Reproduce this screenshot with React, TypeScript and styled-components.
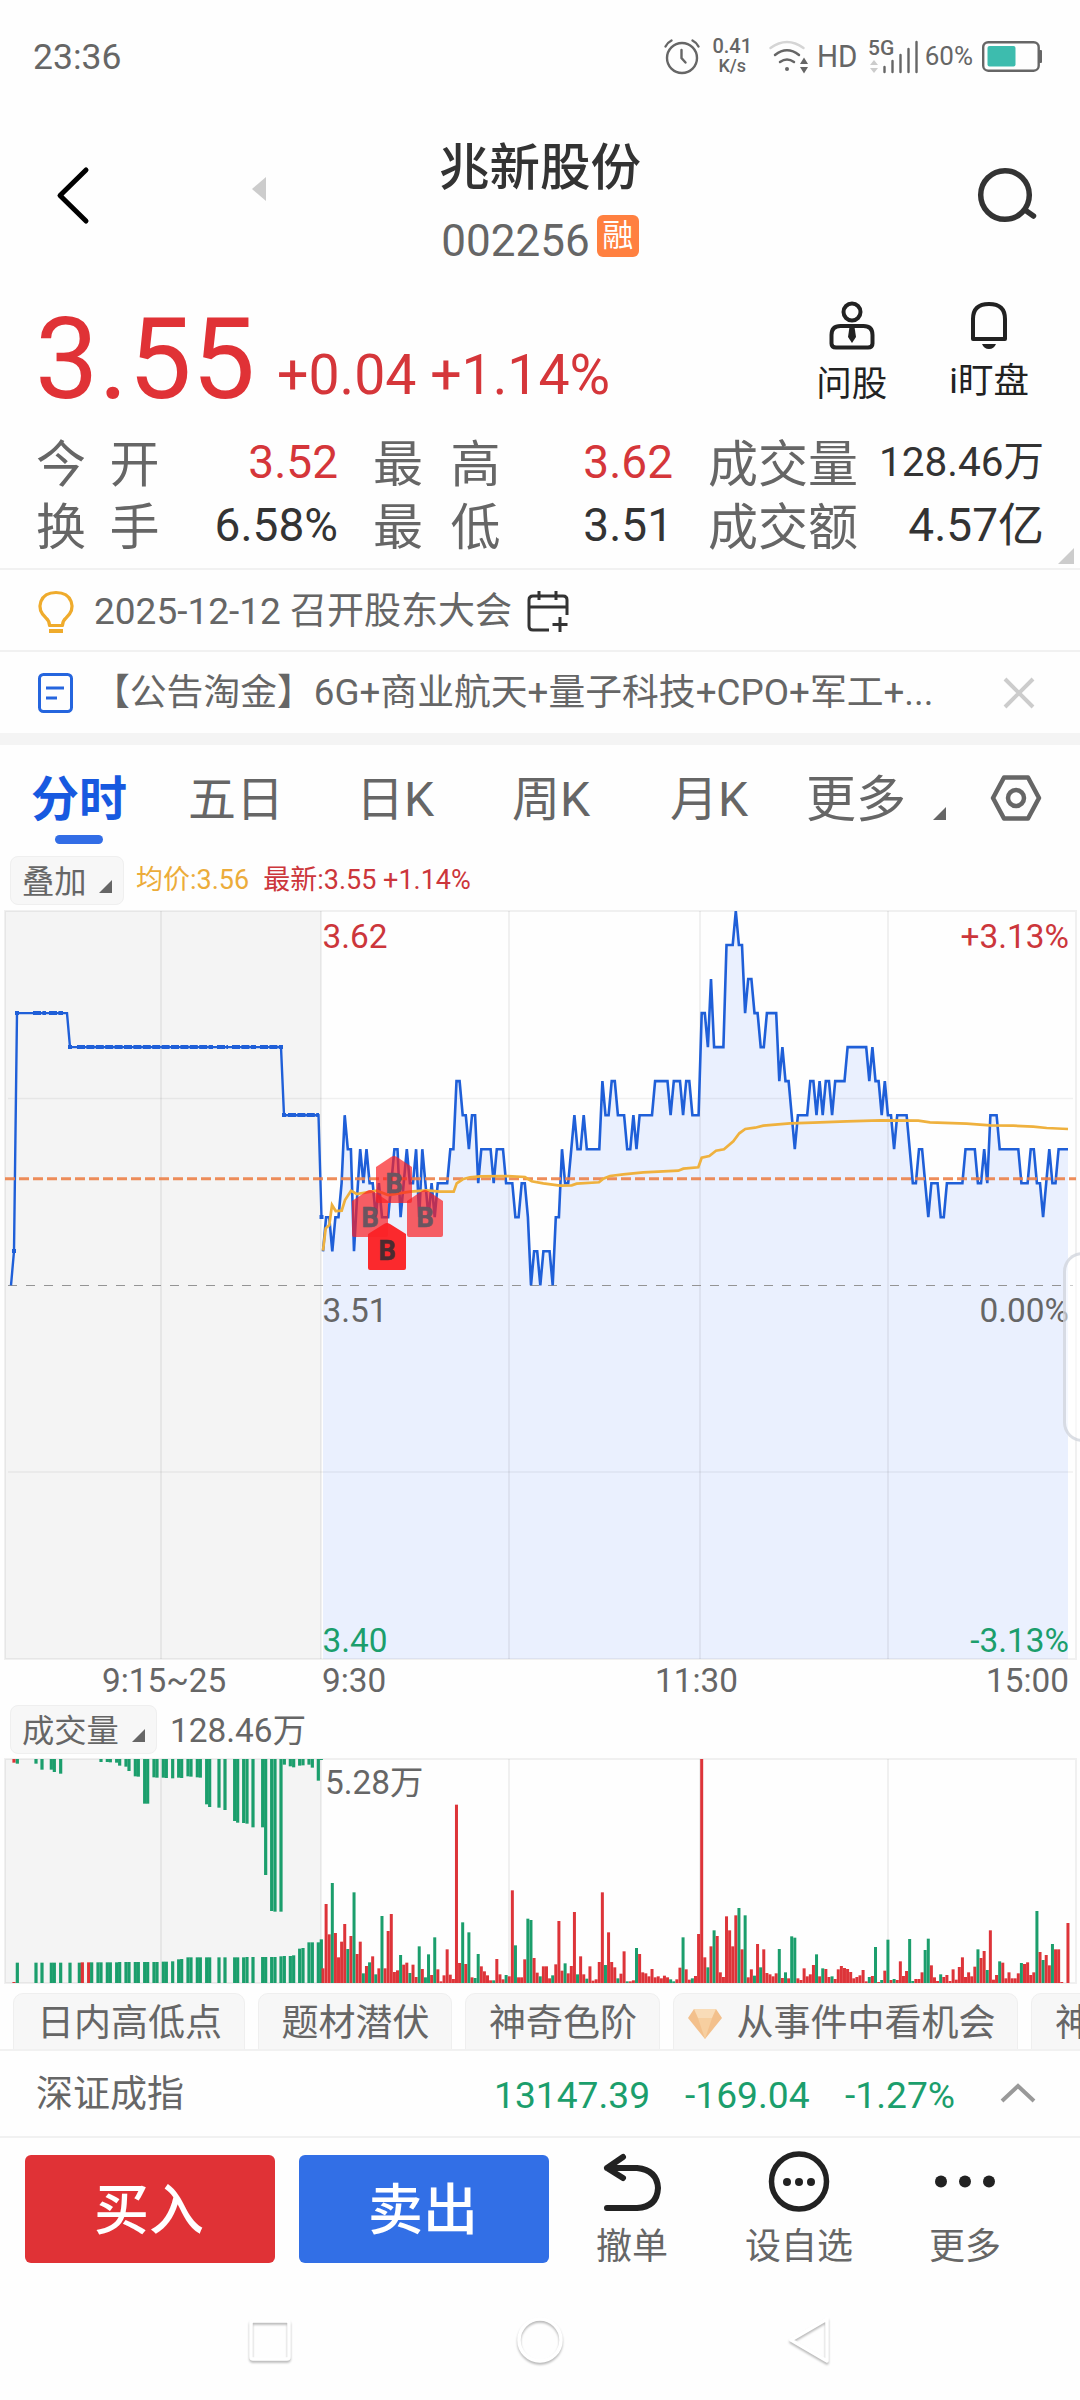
import React from "react";
import styled, { createGlobalStyle } from "styled-components";

const RED = "#e03236";
const TEXT_RED = "#d5363a";
const GREEN = "#1b9e6c";
const BLUE = "#1f5fd8";
const GREY = "#666";

const GlobalStyle = createGlobalStyle`
  * { box-sizing: border-box; }
  body {
    margin: 0;
    background: #fefefe;
    font-family: Roboto, "Noto Sans CJK SC", sans-serif;
    color: #333;
  }
  svg { display: block; flex: none; overflow: visible; }
`;

/* ---------- market data ---------- */

// [minute, ticks above the previous close]
const PRICE: [number, number][] = [
  [0, 1], [1, 2], [2, 2], [3, 1], [4, 2], [5, 2], [6, 3], [7, 5], [8, 4], [9, 4], [10, 1], [11, 2.6], [12, 4], [13, 3], [14, 4],
  [15, 3], [16, 3], [17, 2], [18, 3], [19, 2], [21, 2], [22, 3], [23, 4], [24, 4], [25, 2], [26, 3], [27, 4], [28, 3], [29, 3],
  [30, 4], [31, 2], [32, 4], [33, 3], [34, 2], [35, 3], [36, 2], [37, 3], [40, 3], [41, 4], [42, 4], [43, 6], [44, 6], [45, 5],
  [46, 5], [47, 4], [48, 5], [49, 5], [50, 3], [51, 4], [54, 4], [55, 3], [56, 4], [58, 4], [59, 3], [61, 3], [62, 2], [63, 2],
  [64, 3], [65, 3], [66, 2], [67, 0], [68, 1], [69, 1], [70, 0], [71, 1], [73, 1], [74, 0], [75, 2], [76, 2], [77, 4], [78, 3],
  [79, 3], [80, 4], [81, 5], [82, 4], [83, 4], [84, 5], [85, 4], [89, 4], [90, 6], [91, 5], [92, 5], [93, 6], [94, 6], [95, 5],
  [97, 5], [98, 4], [99, 4], [100, 5], [101, 4], [102, 5], [106, 5], [107, 6], [111, 6], [112, 5], [113, 6], [115, 6], [116, 5],
  [117, 6], [118, 6], [119, 5], [121, 5], [122, 8], [123, 8], [124, 7], [125, 9], [126, 7], [129, 7], [130, 10], [132, 10],
  [133, 11], [134, 10], [135, 10], [136, 8], [137, 9], [138, 9], [139, 8], [140, 8], [141, 7], [142, 7], [143, 8], [146, 8],
  [147, 6], [148, 7], [149, 6], [150, 6], [151, 5], [152, 4], [153, 5], [156, 5], [157, 6], [158, 6], [159, 5], [160, 6],
  [161, 5], [162, 6], [163, 6], [164, 5], [165, 6], [168, 6], [169, 7], [175, 7], [176, 6], [177, 7], [178, 6], [179, 6],
  [180, 5], [181, 6], [182, 5], [183, 5], [184, 4], [185, 5], [188, 5], [189, 4], [190, 3], [191, 3], [192, 4], [193, 4],
  [194, 3], [195, 2], [196, 3], [198, 3], [199, 2], [200, 2], [201, 3], [206, 3], [207, 4], [210, 4], [211, 3], [212, 3],
  [213, 4], [214, 3], [215, 5], [217, 5], [218, 4], [224, 4], [225, 3], [227, 3], [228, 4], [229, 4], [230, 3], [231, 3],
  [232, 2], [233, 3], [234, 4], [235, 3], [236, 3], [237, 4], [240, 4],
];

// call auction, [x, ticks]
const AUCTION: [number, number][] = [
  [11, 0], [14, 1], [17, 8], [67, 8], [70, 7], [281, 7], [284, 5], [318.5, 5], [321.5, 2],
];

// running average, x and y in thirds of a pixel from the session's left edge
const AVERAGE: [number, number][] = [
  [39, 1052], [47, 985], [58, 975], [66, 915], [77, 933], [95, 932], [105, 900], [123, 872], [140, 882], [200, 872], [235, 885],
  [300, 875], [350, 871], [390, 875], [431, 875], [440, 850], [458, 838], [480, 832], [510, 829], [590, 828], [645, 831],
  [665, 844], [700, 850], [750, 857], [785, 856], [800, 851], [867, 847], [880, 836], [900, 828], [940, 823], [1000, 817],
  [1105, 812], [1120, 806], [1165, 802], [1175, 773], [1198, 768], [1218, 752], [1242, 748], [1270, 724], [1288, 700],
  [1306, 687], [1335, 683], [1360, 677], [1440, 670], [1510, 668], [1610, 664], [1710, 661], [1825, 662], [1860, 667],
  [1970, 671], [2040, 676], [2110, 677], [2170, 680], [2210, 684], [2274, 687],
];

// one entry per minute, r = rising, g = falling
const VOLUME =
  "r44 r237 r146 g300 r150 r77 r124 r177 g102 r141 g272 r87 r124 g29 r51 g62 r80 g26 r44 g201 r44 r156 r207 r33 r38 g84 r55 r61 g30 r55 " +
  "r18 g110 r42 g17 g86 r24 g137 r41 r5 r23 r101 r25 r12 r535 r60 g182 r57 g152 r17 g15 g87 r50 r35 r23 r8 g8 r72 r26 r11 g24 " +
  "r20 r278 g113 r17 r17 r71 g193 g189 r75 r31 g20 r50 r50 r14 g23 r56 r186 r37 g59 r29 r51 r213 g26 r80 r26 g13 r50 r7 r11 r63 " +
  "r272 g54 r152 r63 r47 g14 r28 r95 g5 r5 r8 g105 r87 r32 r29 r20 r42 r17 r20 r14 r22 r17 g11 g5 r11 r46 g137 r41 r10 g14 " +
  "r21 r147 r672 r77 g47 r110 g158 r141 r32 r18 r200 r158 r110 r203 g225 r101 g203 r17 r41 g22 r117 g47 r101 r30 r26 r20 r29 g102 r15 g32 " +
  "r14 g140 g136 r14 r9 r44 r20 r26 r54 g86 r20 g44 r42 r18 g20 r12 r41 r51 r45 r42 r33 r14 r18 r23 r39 r5 g18 r21 g108 r3 " +
  "g9 r37 g130 r9 g12 r9 r65 r21 r36 g132 g6 r12 r12 r32 g99 g133 r53 r17 r6 g26 r18 r24 r6 r41 r10 r48 r77 r18 r32 r20 " +
  "r49 g101 r75 r96 g39 r158 r10 r24 g65 r61 r14 r32 r14 r14 r29 g60 r57 r62 r24 r32 g216 r93 g69 r84 r53 g117 r101 r101 r3 r0 r180";

// call auction orders hanging from the top, [x, length]
const HANGING: [number, number][] = [
  [42, 11], [52, 14], [108, 14], [126, 32], [154, 32], [163, 39], [182, 44], [303, 9], [322, 9], [331, 10], [350, 11], [359, 20],
  [378, 23], [387, 36], [406, 52], [415, 53], [434, 134], [443, 134], [462, 55], [471, 56], [490, 56], [499, 57], [518, 58],
  [536, 56], [545, 57], [564, 52], [573, 53], [592, 55], [601, 56], [620, 136], [629, 144], [657, 146], [675, 153], [704, 186],
  [713, 191], [731, 192], [741, 194], [759, 205], [788, 205], [797, 348], [815, 456], [825, 458], [843, 458], [853, 17],
  [871, 22], [881, 25], [899, 20], [909, 19], [927, 17], [937, 26], [955, 65], [964, 3],
];

// call auction matched volume, [x, height]
const MATCHED: [number, number][] = [
  [42, 3], [52, 61], [108, 61], [126, 61], [154, 61], [163, 61], [182, 61], [210, 61], [238, 61], [247, 62], [266, 62], [275, 62],
  [294, 62], [303, 62], [322, 62], [331, 62], [350, 62], [359, 63], [378, 63], [387, 63], [406, 63], [415, 63], [434, 63],
  [443, 63], [462, 63], [471, 63], [490, 64], [499, 64], [518, 65], [536, 71], [545, 72], [564, 77], [573, 77], [592, 77],
  [601, 77], [620, 77], [629, 77], [657, 77], [675, 77], [704, 77], [713, 77], [731, 77], [741, 78], [759, 78], [788, 78],
  [797, 78], [815, 78], [825, 78], [843, 80], [853, 81], [871, 81], [881, 83], [899, 103], [909, 105], [927, 122], [937, 122],
  [955, 122], [964, 131],
];
const RISING_MATCHED = [42, 247, 266];

const minuteX = (m: number) => 323 + m * 3.104;
const tickY = (t: number) => 375.3 - t * 34.03;
const join = (pts: [number, number][]) => pts.map(([x, y]) => `${x.toFixed(1)},${y.toFixed(1)}`).join(" ");

const pricePts = PRICE.map(([m, t]): [number, number] => [minuteX(m), tickY(t)]);
const auctionPts = AUCTION.map(([x, t]): [number, number] => [x, tickY(t)]);
const averagePts = AVERAGE.map(([x, y]): [number, number] => [310 + x / 3, y / 3 - 10]);

/* ---------- layout parts ---------- */

const Screen = styled.div`
  width: 1080px;
  height: 2400px;
  display: flex;
  flex-direction: column;
  overflow: hidden;
  background: #fefefe;
  & > * { flex-shrink: 0; }
`;

const StatusText = styled.span<{ size: number; mr?: number }>`
  font-size: ${(p) => p.size}px;
  margin-right: ${(p) => p.mr ?? 0}px;
  line-height: 1.2;
  color: #666;
`;

const StatusBar = styled.div`
  height: 114px;
  padding: 0 38px 0 33px;
  display: flex;
  align-items: center;
  justify-content: space-between;
`;

const StatusIcons = styled.div`
  display: flex;
  align-items: center;
`;

const NetSpeed = styled.div`
  display: flex;
  flex-direction: column;
  align-items: center;
  width: 41px;
  margin: -2px 16px 0 12px;
  font-size: 20px;
  line-height: 20px;
  font-weight: 500;
  color: #666;
`;

const NetUnit = styled.span`
  font-size: 18px;
`;

const Header = styled.header`
  height: 174px;
  display: grid;
  grid-template-columns: 390px 300px 390px;
`;

const HeaderLeft = styled.div`
  display: flex;
  align-items: flex-start;
  padding: 53px 0 0 54px;
  gap: 162px;
`;

const HeaderRight = styled.div`
  display: flex;
  justify-content: flex-end;
  align-items: flex-start;
  padding: 53px 41px 0 0;
`;

const Title = styled.div`
  display: flex;
  flex-direction: column;
  align-items: center;
  padding-top: 19px;
`;

const StockName = styled.h1`
  margin: 0;
  font-size: 50.5px;
  line-height: 70px;
  font-weight: 500;
  color: #333;
`;

const CodeLine = styled.div`
  display: flex;
  align-items: center;
  gap: 7px;
  height: 66px;
  padding-top: 9px;
  font-size: 44px;
  color: #666;
`;

const MarginTag = styled.span`
  width: 42px;
  height: 42px;
  margin-top: -9px;
  border-radius: 6px;
  background: #ff8040;
  color: #fff;
  font-size: 31px;
  line-height: 42px;
  text-align: center;
`;

const Quote = styled.section`
  height: 146px;
  display: flex;
  justify-content: space-between;
  padding: 0 51px 0 35px;
`;

const PriceLine = styled.div`
  display: flex;
  align-items: flex-start;
`;

const Price = styled.span`
  font-size: 113px;
  line-height: 144px;
  color: ${RED};
  width: 242px;
`;

const Change = styled.span`
  font-size: 55.4px;
  line-height: 66px;
  padding-top: 55px;
  color: ${TEXT_RED};
`;

const QuickActions = styled.div`
  display: flex;
  gap: 62px;
`;

const QuickAction = styled.div<{ top: number; gap: number }>`
  display: flex;
  flex-direction: column;
  align-items: center;
  padding-top: ${(p) => p.top}px;
  gap: ${(p) => p.gap}px;
  font-size: 35.5px;
  line-height: 40px;
  color: #222;
  white-space: nowrap;
`;

const Stats = styled.section`
  height: 134px;
  display: grid;
  grid-template-columns: 302px 335px 371px;
  grid-auto-rows: 63px;
  padding: 0 36px;
`;

const Stat = styled.div<{ inset: number }>`
  display: flex;
  align-items: center;
  justify-content: space-between;
  padding-left: ${(p) => p.inset}px;
`;

const StatLabel = styled.span<{ spread?: number }>`
  font-size: 50px;
  line-height: 63px;
  letter-spacing: ${(p) => p.spread ?? 0}px;
  color: #666;
  white-space: nowrap;
`;

const StatValue = styled.span<{ size: number; color: string }>`
  font-size: ${(p) => p.size}px;
  line-height: 57px;
  padding-bottom: 6px;
  color: ${(p) => p.color};
  white-space: nowrap;
`;

const NewsRow = styled.div<{ h: number; top: number }>`
  position: relative;
  height: ${(p) => p.h}px;
  display: flex;
  align-items: center;
  padding: ${(p) => p.top}px 45px 0 37px;
  border-top: 2px solid #f1f1f1;
`;

const NewsText = styled.span<{ w: number; size: number }>`
  margin-left: 19px;
  width: ${(p) => p.w}px;
  flex: none;
  font-size: ${(p) => p.size}px;
  line-height: 48px;
  color: #666;
  white-space: nowrap;
`;

const Fold = styled.span`
  position: absolute;
  right: 6px;
  top: -22px;
  width: 16px;
  height: 16px;
  background: #ccc;
  clip-path: polygon(100% 0, 100% 100%, 0 100%);
`;

const PushRight = styled.span<{ mt?: number }>`
  margin-left: auto;
  margin-top: ${(p) => p.mt ?? 0}px;
`;

const Band = styled.div`
  height: 12px;
  background: #f4f4f4;
`;

const Tabs = styled.nav`
  height: 109px;
  display: flex;
  align-items: flex-start;
  padding: 20px 38px 0 31px;
`;

const Tab = styled.div<{ w: number; active?: boolean; size?: number }>`
  width: ${(p) => p.w}px;
  flex: none;
  display: flex;
  flex-direction: column;
  font-size: ${(p) => p.size ?? 48}px;
  line-height: 70px;
  color: ${(p) => (p.active ? "#1759e0" : "#666")};
  font-weight: ${(p) => (p.active ? 700 : 400)};
`;

const Indicator = styled.span`
  width: 48px;
  height: 9px;
  margin: 0 0 0 24px;
  border-radius: 5px;
  background: #326de6;
`;

const Corner = styled.span<{ mt: number }>`
  width: 13px;
  height: 13px;
  flex: none;
  margin-top: ${(p) => p.mt}px;
  background: #666;
  clip-path: polygon(100% 0, 100% 100%, 0 100%);
`;

const LegendRow = styled.div<{ h: number }>`
  height: ${(p) => p.h}px;
  display: flex;
  align-items: flex-start;
  padding: 2px 0 0 10px;
`;

const Picker = styled.div<{ w: number }>`
  width: ${(p) => p.w}px;
  height: 49px;
  display: flex;
  align-items: center;
  justify-content: space-between;
  padding: 2px 11px 0 11px;
  border: 1px solid #efefef;
  border-radius: 8px;
  background: #f7f7f7;
  font-size: 32.3px;
  line-height: 46px;
  color: #666;
`;

const Legend = styled.span<{ size: number; color: string; ml: number; mt?: number }>`
  margin-left: ${(p) => p.ml}px;
  margin-top: ${(p) => p.mt ?? 0}px;
  font-size: ${(p) => p.size}px;
  line-height: 46px;
  color: ${(p) => p.color};
  white-space: pre;
`;

const ChartBox = styled.div<{ h: number }>`
  position: relative;
  height: ${(p) => p.h}px;
`;

const ChartLabel = styled.span<{ top: number; left?: number; right?: number; color: string }>`
  position: absolute;
  top: ${(p) => p.top}px;
  ${(p) => (p.left !== undefined ? `left: ${p.left}px;` : `right: ${p.right}px;`)}
  font-size: 33.4px;
  line-height: 40px;
  color: ${(p) => p.color};
`;

const SideHandle = styled.span`
  position: absolute;
  right: -22px;
  top: 342px;
  width: 39px;
  height: 190px;
  border: 3px solid rgba(190, 195, 205, 0.55);
  border-radius: 28px;
  background: rgba(255, 255, 255, 0.5);
`;

const Axis = styled.div`
  height: 43px;
  display: grid;
  grid-template-columns: 219px 274px 387px 1fr;
  padding: 0 11px 0 102px;
  font-size: 33.3px;
  line-height: 42px;
  color: #666;
`;

const AxisMark = styled.span<{ align?: string; shift?: number }>`
  text-align: ${(p) => p.align ?? "left"};
  padding-left: ${(p) => p.shift ?? 0}px;
`;

const Chips = styled.div`
  height: 56px;
  margin-top: 8px;
  display: flex;
  gap: 13px;
  padding-left: 13px;
  overflow: hidden;
`;

const Chip = styled.div`
  flex: none;
  display: flex;
  align-items: center;
  height: 66px;
  padding: 0 21.500px 5px 23px;
  border: 1px solid #efefef;
  border-radius: 10px;
  background: #f7f7f7;
  font-size: 37px;
  line-height: 58px;
  color: #666;
  gap: 15px;
  &:nth-child(4) { padding-left: 14px; }
`;

const IndexRow = styled.div`
  height: 87px;
  display: flex;
  align-items: center;
  padding: 2px 44px 0 36px;
  border-top: 2px solid #f1f1f1;
`;

const IndexName = styled.span`
  width: 458px;
  font-size: 37px;
  line-height: 44px;
  color: #666;
`;

const IndexValue = styled.span<{ w: number }>`
  width: ${(p) => p.w}px;
  font-size: 37.2px;
  line-height: 44px;
  color: ${GREEN};
`;

const TradeBar = styled.div`
  height: 160px;
  display: flex;
  align-items: flex-start;
  padding: 17px 0 0 25px;
  border-top: 2px solid #f1f1f1;
`;

const TradeButton = styled.button<{ tone: string }>`
  width: 250px;
  height: 108px;
  margin-right: 24px;
  padding: 2px 2px 0 0;
  border: 0;
  border-radius: 6px;
  background: ${(p) => p.tone};
  color: #fff;
  font: 500 55px/80px Roboto, "Noto Sans CJK SC", sans-serif;
`;

const TradeAction = styled.div<{ w: number; ml: number }>`
  width: ${(p) => p.w}px;
  margin-left: ${(p) => p.ml}px;
  display: flex;
  flex-direction: column;
  align-items: center;
  gap: 9px;
  margin-top: -5px;
  font-size: 36px;
  line-height: 48px;
  color: #666;
  white-space: nowrap;
`;

const NavBar = styled.div`
  height: 104px;
  display: flex;
  justify-content: center;
  gap: 220px;
  padding-top: 17px;
  filter: drop-shadow(0 2px 1px rgba(0, 0, 0, 0.28));
`;

/* ---------- charts ---------- */

const GRID_X = [161, 321, 509, 700, 888];

function Marker({ x, y, solid }: { x: number; y: number; solid?: boolean }) {
  const w = solid ? 38 : 36;
  return (
    <g>
      <path
        d={`M${x - w / 2} ${y + 11} L${x - 3} ${y + 1} Q${x} ${y - 1} ${x + 3} ${y + 1} L${x + w / 2} ${y + 11} V${y + 45} Q${x + w / 2} ${y + 47} ${x + w / 2 - 2} ${y + 47} H${x - w / 2 + 2} Q${x - w / 2} ${y + 47} ${x - w / 2} ${y + 45} Z`}
        fill={solid ? "#fb2226" : "#fa1e22"}
        fillOpacity={solid ? 0.97 : 0.7}
      />
      <text
        x={x}
        y={y + 37}
        fontSize="27"
        fontWeight="700"
        textAnchor="middle"
        fill={solid ? "#4a2b30" : "#6a5560"}
        stroke={solid ? "#4a2b30" : "#6a5560"}
        strokeWidth="0.6"
        fontFamily="Roboto, sans-serif"
      >
        B
      </text>
    </g>
  );
}

function PriceChart() {
  return (
    <ChartBox h={750}>
      <svg width="1080" height="750" viewBox="0 0 1080 750">
        <rect x="5" y="1" width="316" height="748" fill="#f4f4f4" />
        <polygon points={`323,749 ${join(pricePts)} 1068,749`} fill="#eaf0fe" />
        <g stroke="#000" strokeOpacity="0.055" strokeWidth="2" fill="none">
          <rect x="5" y="1" width="1071" height="748" />
          {GRID_X.map((x) => (
            <path key={x} d={`M${x} 1V749`} />
          ))}
          <path d="M8 188.5H1073M8 562H1073" strokeWidth="1.5" />
        </g>
        <path d="M8 375.5H1073" stroke="#949494" strokeWidth="1.2" strokeDasharray="9 9" />
        <polyline points={join(auctionPts)} fill="none" stroke={BLUE} strokeWidth="2.4" />
        <path
          d="M15 103h4M33 103h13M49 103h14M68 137h4M77 137h136M217 137h11M232 137h24M260 137h23M282 205h4M288 205h31M319.5 307h4M12 341h4"
          stroke={BLUE}
          strokeWidth="4"
          strokeDasharray="8 1.4"
        />
        <polyline points={join(pricePts)} fill="none" stroke={BLUE} strokeWidth="2.6" />
        <path d="M5 268.7H1076" stroke="#ec8148" strokeOpacity=".9" strokeWidth="3" strokeDasharray="10 4" />
        <polyline points={join(averagePts)} fill="none" stroke="#efb13e" strokeWidth="2.7" />
        <Marker x={394} y={246} />
        <Marker x={370} y={280} />
        <Marker x={425} y={280} />
        <Marker x={387} y={313} solid />
      </svg>
      <ChartLabel top={7} left={322.5} color="#cc363b">3.62</ChartLabel>
      <ChartLabel top={7} right={11} color="#cc363b">+3.13%</ChartLabel>
      <ChartLabel top={381} left={322.5} color={GREY}>3.51</ChartLabel>
      <ChartLabel top={381} right={11} color={GREY}>0.00%</ChartLabel>
      <ChartLabel top={711} left={322.5} color={GREEN}>3.40</ChartLabel>
      <ChartLabel top={711} right={11} color={GREEN}>-3.13%</ChartLabel>
      <SideHandle />
    </ChartBox>
  );
}

function VolumeChart() {
  return (
    <ChartBox h={227}>
      <svg width="1080" height="227" viewBox="0 0 1080 227">
        <rect x="5" y="1" width="316" height="224" fill="#f4f4f4" />
        <g stroke="#000" strokeOpacity="0.055" strokeWidth="2" fill="none">
          <rect x="5" y="1" width="1071" height="224" />
          {[161, 321, 509, 700, 888].map((x) => (
            <path key={x} d={`M${x} 1V225`} />
          ))}
        </g>
        {HANGING.map(([x, l]) => (
          <rect key={x} x={x / 3 - 1.6} y="1" width="3.2" height={l / 3} fill={x === 42 ? RED : GREEN} />
        ))}
        {MATCHED.map(([x, l]) => (
          <rect key={x} x={x / 3 - 1.6} y={225 - l / 3} width="3.2" height={l / 3} fill={RISING_MATCHED.includes(x) ? RED : GREEN} />
        ))}
        {VOLUME.split(" ").map((v, i) => {
          const h = Number(v.slice(1)) / 3;
          return <rect key={i} x={minuteX(i) - 1.5} y={225 - h} width="3" height={h} fill={v[0] === "r" ? "#dd3439" : GREEN} />;
        })}
      </svg>
      <ChartLabel top={5} left={325} color={GREY}>5.28万</ChartLabel>
    </ChartBox>
  );
}

/* ---------- status icons ---------- */

const AlarmIcon = () => (
  <svg width="36" height="36" viewBox="0 0 36 36" fill="none" stroke="#666" strokeWidth="2.4" strokeLinecap="round">
    <circle cx="18" cy="19" r="15" />
    <path d="M17.500 11v8l4 4.500M1.500 7.500q2-4 6-6M34.500 7.500q-2-4-6-6" />
  </svg>
);

const WifiIcon = () => (
  <svg width="49" height="34" viewBox="0 0 49 34" fill="none" stroke="#666" strokeWidth="2.500" strokeLinecap="round">
    <path d="M1.500 8Q18-4 34.500 8" stroke="#d5d5d5" />
    <path d="M6 15q12-9.500 24 0M11 22q7-5 14 0" />
    <circle cx="18" cy="29" r="2" fill="#666" stroke="none" />
    <path d="M31 24l4-6.500 4 6.500zM31 27l4 6.500 4-6.500z" fill="#666" stroke="none" />
  </svg>
);

const HdIcon = () => (
  <svg width="50" height="36" viewBox="0 0 50 36">
    <text x="-1" y="28" fontSize="32" fill="#666" textLength="40.500" lengthAdjust="spacingAndGlyphs" fontFamily="Roboto, sans-serif">
      HD
    </text>
  </svg>
);

const SignalIcon = () => (
  <svg width="57" height="36" viewBox="0 0 57 36">
    <text x="0" y="16" fontSize="21" fontWeight="500" fill="#666" fontFamily="Roboto, sans-serif">
      5G
    </text>
    <path d="M2 26l4-5 4 5zM2 29l4 5 4-5z" fill="#ccc" />
    <path d="M16.500 28v5M24.500 22v11M32.500 16v17M40.500 10v23M48.500 3v30" stroke="#666" strokeWidth="2.400" strokeLinecap="round" />
  </svg>
);

const BatteryIcon = () => (
  <svg width="60" height="32" viewBox="0 0 60 32">
    <rect x="1.200" y="1.200" width="55.500" height="28.500" rx="5" fill="none" stroke="#666" strokeWidth="2.400" />
    <rect x="5.500" y="5" width="28" height="20.500" rx="2" fill="#3dbcae" />
    <rect x="57" y="9" width="3" height="13" rx="1" fill="#666" />
  </svg>
);

export default function App() {
  return (
    <Screen>
      <GlobalStyle />
      <StatusBar>
        <StatusText size={35.5}>23:36</StatusText>
        <StatusIcons>
          <AlarmIcon />
          <NetSpeed>
            <span>0.41</span>
            <NetUnit>K/s</NetUnit>
          </NetSpeed>
          <WifiIcon />
          <HdIcon />
          <SignalIcon />
          <StatusText size={26} mr={9}>60%</StatusText>
          <BatteryIcon />
        </StatusIcons>
      </StatusBar>

      <Header>
        <HeaderLeft>
          <svg width="36" height="57" viewBox="0 0 36 57">
            <path d="M32 3L6 28.5 32 54" fill="none" stroke="#000" strokeWidth="5" strokeLinecap="round" strokeLinejoin="round" />
          </svg>
          <svg width="14" height="46" viewBox="0 0 14 46">
            <path d="M14 10v24L0 22z" fill="#ccc" />
          </svg>
        </HeaderLeft>
        <Title>
          <StockName>兆新股份</StockName>
          <CodeLine>
            002256<MarginTag>融</MarginTag>
          </CodeLine>
        </Title>
        <HeaderRight>
          <svg width="62" height="58" viewBox="0 0 62 58" fill="none" stroke="#333" strokeWidth="5.500" strokeLinecap="round">
            <circle cx="28" cy="28" r="24.300" />
            <path d="M48 43l8.500 6" />
          </svg>
        </HeaderRight>
      </Header>

      <Quote>
        <PriceLine>
          <Price>3.55</Price>
          <Change>+0.04 +1.14%</Change>
        </PriceLine>
        <QuickActions>
          <QuickAction top={13} gap={14}>
            <svg width="46" height="49" viewBox="0 0 46 49" fill="none" stroke="#222" strokeWidth="4">
              <circle cx="23" cy="11" r="8.500" />
              <path d="M7 46.500h32q4.500 0 4.500-4V34q0-9-9-9h-23q-9 0-9 9v8.500q0 4 4.500 4z" />
              <path d="M20.500 26h5l1.500 10-4 6-4-6z" fill="#222" stroke="none" />
            </svg>
            问股
          </QuickAction>
          <QuickAction top={13} gap={11}>
            <svg width="38" height="49" viewBox="0 0 38 49">
              <path d="M3 38V18Q3 3 19 3t16 15v20z" fill="none" stroke="#222" strokeWidth="4" strokeLinejoin="round" />
              <path d="M12 43h14q-2 5-7 5t-7-5z" fill="#222" />
            </svg>
            i盯盘
          </QuickAction>
        </QuickActions>
      </Quote>

      <Stats>
        <Stat inset={0}><StatLabel spread={23.5}>今开</StatLabel><StatValue size={46} color={TEXT_RED}>3.52</StatValue></Stat>
        <Stat inset={35}><StatLabel spread={27.5}>最高</StatLabel><StatValue size={46} color={TEXT_RED}>3.62</StatValue></Stat>
        <Stat inset={35}><StatLabel>成交量</StatLabel><StatValue size={40.5} color="#333">128.46万</StatValue></Stat>
        <Stat inset={0}><StatLabel spread={23.5}>换手</StatLabel><StatValue size={46} color="#333">6.58%</StatValue></Stat>
        <Stat inset={35}><StatLabel spread={27.5}>最低</StatLabel><StatValue size={46} color="#333">3.51</StatValue></Stat>
        <Stat inset={35}><StatLabel>成交额</StatLabel><StatValue size={46} color="#333">4.57亿</StatValue></Stat>
      </Stats>

      <NewsRow h={82} top={3}>
        <Fold />
        <svg width="38" height="44" viewBox="0 0 38 44" fill="none" stroke="#efab2c" strokeWidth="3.200">
          <path d="M12.500 35.500Q12.500 31 9 28C-2 18 3 2.500 19 2.500S40 18 29 28Q25.500 31 25.500 35.500z" strokeLinejoin="round" />
          <path d="M12 41h14" strokeWidth="4" />
        </svg>
        <NewsText w={433} size={37}>2025-12-12 召开股东大会</NewsText>
        <svg width="42" height="42" viewBox="0 0 42 42" fill="none" stroke="#333" strokeWidth="3">
          <path d="M22 39H6q-4 0-4-4V9q0-4 4-4h30q4 0 4 4v15M2 16h38M12 0v9M29 0v9M33 26v15M25.500 33.500h15" />
        </svg>
      </NewsRow>
      <NewsRow h={83} top={1}>
        <svg width="37" height="42" viewBox="0 0 37 42" fill="none" stroke="#2565de" strokeWidth="3">
          <rect x="2.500" y="2.500" width="32" height="37" rx="4" />
          <path d="M9 16h18M9 26h11" />
        </svg>
        <NewsText w={872} size={36.8}>【公告淘金】6G+商业航天+量子科技+CPO+军工+...</NewsText>
        <PushRight>
          <svg width="32" height="32" viewBox="0 0 32 32">
            <path d="M2 2l28 28M30 2L2 30" stroke="#ccc" strokeWidth="4" />
          </svg>
        </PushRight>
      </NewsRow>
      <Band />

      <Tabs>
        <Tab w={157} active>分时<Indicator /></Tab>
        <Tab w={168}>五日</Tab>
        <Tab w={156}>日K</Tab>
        <Tab w={158}>周K</Tab>
        <Tab w={136}>月K</Tab>
        <Tab w={127} size={50}>更多</Tab>
        <Corner mt={42} />
        <PushRight mt={10}>
          <svg width="52" height="46" viewBox="0 0 52 46" fill="none" stroke="#666" strokeWidth="4.500">
            <path d="M14 2.500h24L49 23 38 43.500H14L3 23z" strokeLinejoin="round" />
            <circle cx="26" cy="23" r="8" />
          </svg>
        </PushRight>
      </Tabs>

      <LegendRow h={56}>
        <Picker w={114}>叠加<Corner mt={10} /></Picker>
        <Legend size={27} color="#ecac3a" ml={12} mt={1}>均价:3.56</Legend>
        <Legend size={27} color="#cc363b" ml={14} mt={1}>最新:3.55 +1.14%</Legend>
      </LegendRow>
      <PriceChart />
      <Axis>
        <AxisMark>9:15~25</AxisMark>
        <AxisMark shift={1}>9:30</AxisMark>
        <AxisMark shift={60}>11:30</AxisMark>
        <AxisMark align="right">15:00</AxisMark>
      </Axis>
      <LegendRow h={55}>
        <Picker w={147}>成交量<Corner mt={10} /></Picker>
        <Legend size={33.4} color="#666" ml={13} mt={3}>128.46万</Legend>
      </LegendRow>
      <VolumeChart />

      <Chips>
        <Chip>日内高低点</Chip>
        <Chip>题材潜伏</Chip>
        <Chip>神奇色阶</Chip>
        <Chip>
          <svg width="34" height="30" viewBox="0 0 34 30">
            <path d="M6 0h22l6 9-17 21L0 9z" fill="#f3c08c" />
            <path d="M6 0l4 9h14l4-9z" fill="#f9dcb8" />
            <path d="M10 9h14l-7 21z" fill="#f7cfa0" />
          </svg>
          从事件中看机会
        </Chip>
        <Chip>神奇九转</Chip>
      </Chips>
      <IndexRow>
        <IndexName>深证成指</IndexName>
        <IndexValue w={191}>13147.39</IndexValue>
        <IndexValue w={160}>-169.04</IndexValue>
        <IndexValue w={130}>-1.27%</IndexValue>
        <PushRight mt={-3}>
          <svg width="36" height="22" viewBox="0 0 36 22">
            <path d="M2 19L18 4l16 15" fill="none" stroke="#999" strokeWidth="4" />
          </svg>
        </PushRight>
      </IndexRow>
      <TradeBar>
        <TradeButton tone={RED}>买入</TradeButton>
        <TradeButton tone="#326fe6">卖出</TradeButton>
        <TradeAction w={72} ml={23}>
          <svg width="60" height="64" viewBox="0 0 60 64" fill="none" stroke="#222" strokeWidth="6" strokeLinecap="round" strokeLinejoin="round">
            <path d="M21 7L5 18l16 10M5 18h30q20 2 21 20-1 19-21 20H5" />
          </svg>
          撤单
        </TradeAction>
        <TradeAction w={108} ml={77}>
          <svg width="62" height="64" viewBox="0 0 62 64" fill="#222">
            <circle cx="31" cy="31.500" r="27.500" fill="none" stroke="#222" strokeWidth="5.500" />
            <circle cx="19" cy="32" r="4" />
            <circle cx="31" cy="32" r="4" />
            <circle cx="43" cy="32" r="4" />
          </svg>
          设自选
        </TradeAction>
        <TradeAction w={72} ml={76}>
          <svg width="62" height="64" viewBox="0 0 62 64" fill="#222">
            <circle cx="7" cy="31.500" r="6" />
            <circle cx="31" cy="31.500" r="6" />
            <circle cx="55" cy="31.500" r="6" />
          </svg>
          更多
        </TradeAction>
      </TradeBar>
      <NavBar>
        <svg width="50" height="56" viewBox="0 0 50 56">
          <rect x="6" y="8" width="38" height="38" rx="2" fill="none" stroke="#fff" strokeWidth="3.500" />
        </svg>
        <svg width="50" height="56" viewBox="0 0 50 56">
          <circle cx="25" cy="27" r="21" fill="none" stroke="#fff" strokeWidth="3.500" />
        </svg>
        <svg width="50" height="56" viewBox="0 0 50 56">
          <path d="M42 6v42L6 27z" fill="none" stroke="#fff" strokeWidth="3.500" strokeLinejoin="round" />
        </svg>
      </NavBar>
    </Screen>
  );
}
